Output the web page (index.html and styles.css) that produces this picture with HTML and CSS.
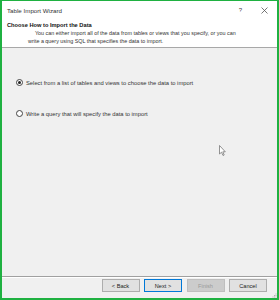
FILE: index.html
```html
<!doctype html>
<html>
  <head>
    <meta charset="utf-8"/>
    <title>Table Import Wizard</title>
    <link rel="stylesheet" href="styles.css">
  </head>
  <body>
    <div class="window">
      <div class="titlebar">
        <span class="title">Table Import Wizard</span>
        <span class="help">?</span>
        <svg class="close" width="7" height="7" viewBox="0 0 7 7">
          <path d="M0.5 0.5 L6.5 6.5 M6.5 0.5 L0.5 6.5" stroke="#555" stroke-width="0.8" fill="none"/>
        </svg>
      </div>
      <div class="header">
        <h1>Choose How to Import the Data</h1>
        <p>You can either import all of the data from tables or views that you specify, or you can write a query using SQL that specifies the data to import.</p>
      </div>
      <div class="content">
        <label class="option first">
          <span class="radio checked"></span>
          Select from a list of tables and views to choose the data to import
        </label>
        <label class="option">
          <span class="radio"></span>
          Write a query that will specify the data to import
        </label>
        <svg class="cursor" width="7" height="12" viewBox="0 0 7 12">
          <path d="M0.5 0.5 L0.5 9 L2.5 7.2 L4 10.5 L5.2 10 L3.8 6.8 L6.3 6.8 Z" fill="#fff" stroke="#777" stroke-width="0.8"/>
        </svg>
      </div>
      <div class="footer">
        <button class="btn">&lt; Back</button>
        <button class="btn default">Next &gt;</button>
        <button class="btn" disabled>Finish</button>
        <button class="btn">Cancel</button>
        <svg class="grip" width="5" height="5" viewBox="0 0 5 5">
          <rect x="3.5" y="0.5" width="1" height="1" fill="#b0b0b0"/>
          <rect x="2" y="2" width="1" height="1" fill="#b0b0b0"/>
          <rect x="3.5" y="2" width="1" height="1" fill="#b0b0b0"/>
          <rect x="0.5" y="3.5" width="1" height="1" fill="#b0b0b0"/>
          <rect x="2" y="3.5" width="1" height="1" fill="#b0b0b0"/>
          <rect x="3.5" y="3.5" width="1" height="1" fill="#b0b0b0"/>
        </svg>
      </div>
    </div>
  </body>
</html>
```

FILE: styles.css
```css
* {
  margin: 0;
  padding: 0;
  box-sizing: border-box;
}

html, body {
  width: 279px;
  height: 300px;
  overflow: hidden;
}

body {
  font-family: "Liberation Sans", Arial, sans-serif;
  font-size: 5.4px;
  color: #222;
  background: #f0f0f0;
}

.window {
  width: 279px;
  height: 300px;
  display: flex;
  flex-direction: column;
  border: 2px solid #1fb141;
  border-top-width: 1px;
  background: #f0f0f0;
}

.titlebar {
  height: 18px;
  display: flex;
  align-items: center;
  background: #fff;
  padding-left: 5px;
}

.titlebar .title {
  flex: 1;
  font-size: 6.2px;
  color: #333;
}

.titlebar .help {
  font-size: 6px;
  color: #444;
  margin-right: 19px;
}

.titlebar .close {
  margin-right: 9px;
}

.header {
  background: #fff;
  padding: 2px 0 2px 5px;
  border-bottom: 1px solid #a8a8a8;
}

.header h1 {
  font-size: 5.7px;
  font-weight: bold;
  line-height: 8px;
  color: #111;
}

.header p {
  line-height: 8px;
  padding-left: 21px;
  padding-right: 30px;
  text-indent: 7px;
  color: #333;
}

.content {
  flex: 1;
  position: relative;
  padding-top: 31px;
  display: flex;
  flex-direction: column;
  gap: 24px;
}

.option {
  display: flex;
  align-items: center;
  height: 7px;
  padding-left: 14px;
  gap: 3px;
  font-size: 5.8px;
  color: #333;
}

.radio {
  width: 7px;
  height: 7px;
  border: 1px solid #444;
  border-radius: 50%;
  background: #fff;
  position: relative;
}

.radio.checked::after {
  content: "";
  position: absolute;
  left: 1px;
  top: 1px;
  width: 3px;
  height: 3px;
  border-radius: 50%;
  background: #222;
}

.cursor {
  position: absolute;
  left: 217px;
  top: 97px;
}

.footer {
  height: 22px;
  border-top: 1px solid #a0a0a0;
  box-shadow: inset 0 1px 0 #fff;
  display: flex;
  justify-content: flex-end;
  align-items: flex-start;
  gap: 4.5px;
  padding: 2px 10px 0 0;
  position: relative;
}

.btn {
  width: 38px;
  height: 13px;
  font-family: "Liberation Sans", Arial, sans-serif;
  font-size: 5.6px;
  color: #222;
  background: #e1e1e1;
  border: 1px solid #adadad;
}

.btn.default {
  border-color: #0078d7;
}

.btn:disabled {
  background: #cccccc;
  border-color: #bfbfbf;
  color: #9a9a9a;
}

.grip {
  position: absolute;
  right: 0;
  bottom: 0;
}
```
